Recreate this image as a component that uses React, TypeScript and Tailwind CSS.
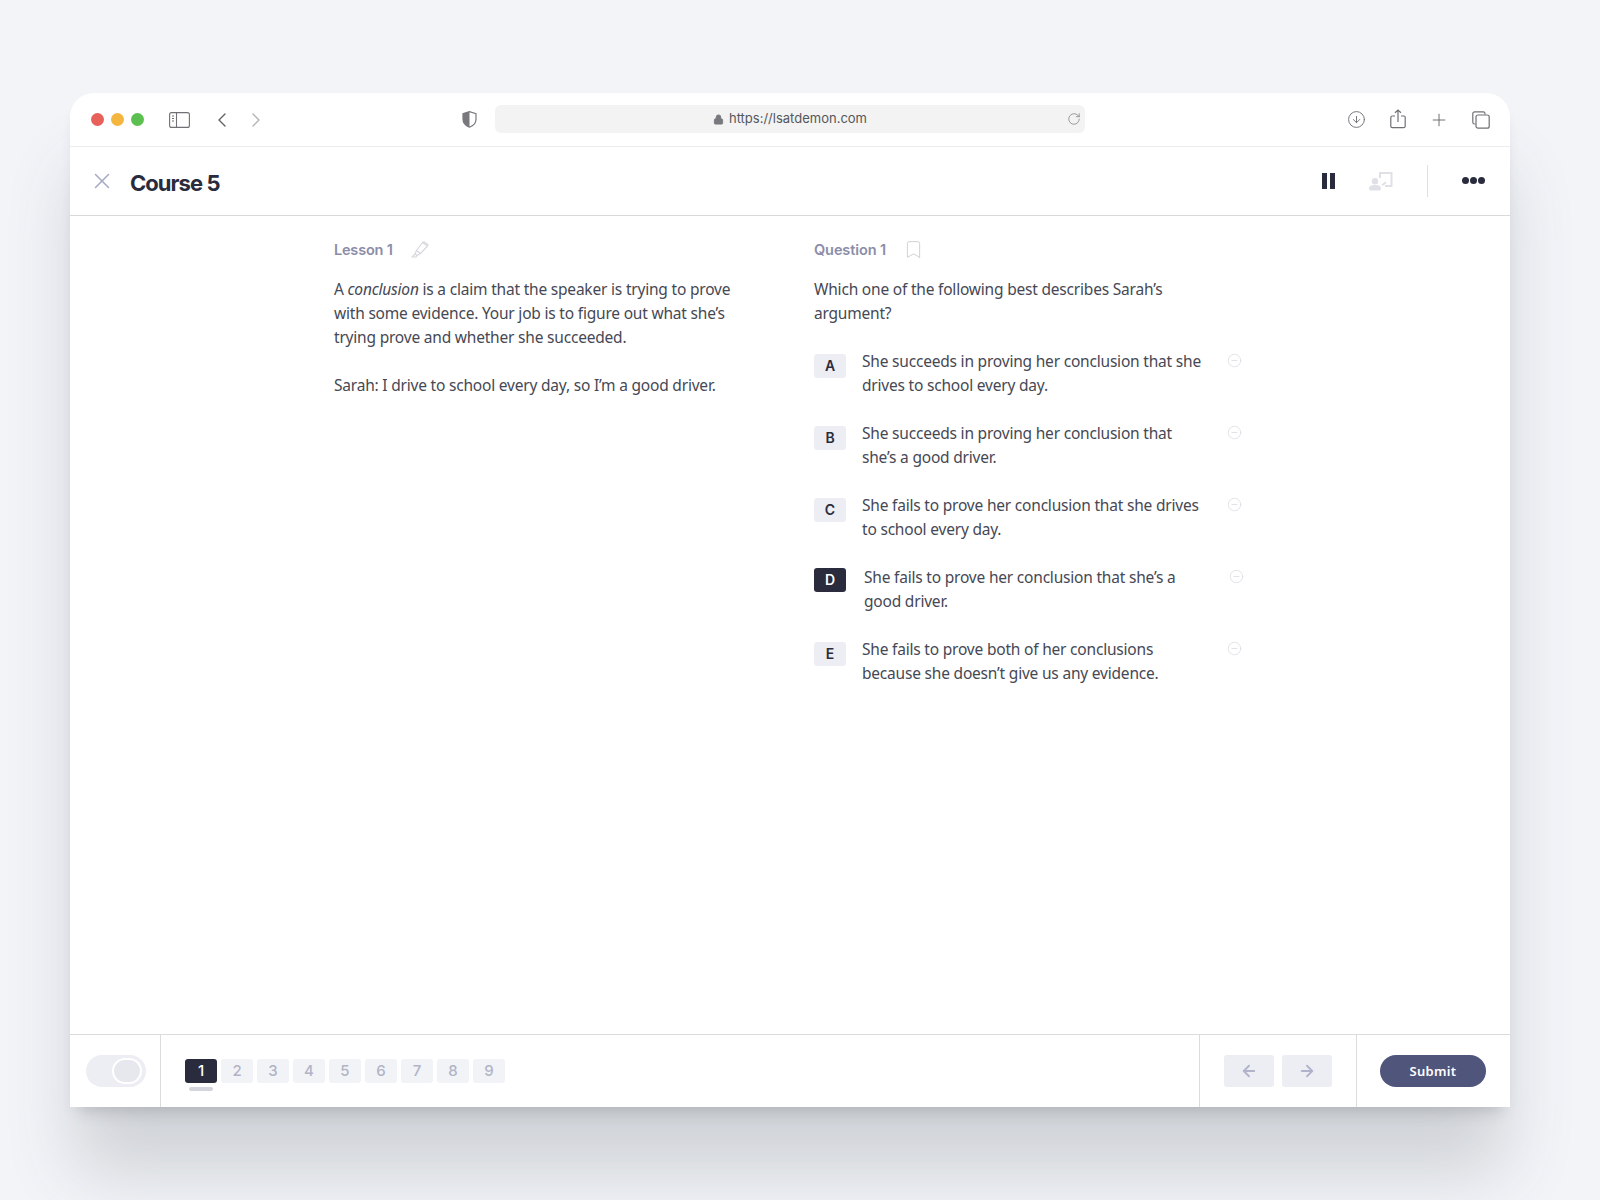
import React from 'react';
import { ChevronLeft, ChevronRight, CircleArrowDown, Plus, RotateCw, Lock, X, Bookmark, CircleMinus, ArrowLeft, ArrowRight } from 'lucide-react';

const BODY = "font-['Noto_Sans',sans-serif]";
const UI = "font-['Inter',sans-serif]";

const options = [
  { key: 'A', lines: ['She succeeds in proving her conclusion that she', 'drives to school every day.'] },
  { key: 'B', lines: ['She succeeds in proving her conclusion that', 'she’s a good driver.'] },
  { key: 'C', lines: ['She fails to prove her conclusion that she drives', 'to school every day.'] },
  { key: 'D', lines: ['She fails to prove her conclusion that she’s a', 'good driver.'], selected: true },
  { key: 'E', lines: ['She fails to prove both of her conclusions', 'because she doesn’t give us any evidence.'] },
];

const SidebarIcon = () => (
  <svg width="21" height="16" viewBox="0 0 21 16" fill="none" stroke="#6f7175" strokeWidth="1.1">
    <rect x="0.6" y="0.6" width="19.8" height="14.8" rx="2" />
    <path d="M7.5 0.6v14.8" />
    <path d="M3 4h2M3 6.5h2M3 9h2" strokeWidth="1.2" />
  </svg>
);

const ShieldIcon = () => (
  <svg width="15" height="17" viewBox="0 0 15 17">
    <path d="M7.5 0.7 1 2.6v5.6c0 3.8 3 6.6 6.5 8 3.5-1.4 6.5-4.2 6.5-8V2.6z" fill="#fff" stroke="#77797d" strokeWidth="1.2" />
    <path d="M7.5 0.7 1 2.6v5.6c0 3.8 3 6.6 6.5 8z" fill="#77797d" />
  </svg>
);

const ShareIcon = () => (
  <svg width="16" height="20" viewBox="0 0 16 20" fill="none" stroke="#6f7175" strokeWidth="1.2">
    <path d="M5 7H2.2A1.4 1.4 0 0 0 .8 8.4v8.8a1.4 1.4 0 0 0 1.4 1.4h11.6a1.4 1.4 0 0 0 1.4-1.4V8.4A1.4 1.4 0 0 0 13.8 7H11" />
    <path d="M8 13V1M5 3.8 8 1l3 2.8" />
  </svg>
);

const TabsIcon = () => (
  <svg width="18" height="18" viewBox="0 0 18 18" fill="none" stroke="#6f7175" strokeWidth="1.2">
    <path d="M3.5 13H2.6A1.8 1.8 0 0 1 .8 11.2V2.6A1.8 1.8 0 0 1 2.6.8h8.6A1.8 1.8 0 0 1 13 2.6v.9" />
    <rect x="4" y="4" width="13.2" height="13.2" rx="2" />
  </svg>
);

const PresenterIcon = () => (
  <svg width="25" height="19" viewBox="0 0 25 19" fill="#dfe1e7">
    <path d="M10 0h13.500v15H16v-2h5.500V2H12v4h-2z" />
    <path d="M12.500 12.500l4-3 1.200 1.400-4 3.100z" />
    <circle cx="6" cy="9.300" r="3.200" />
    <path d="M0 16.500c0-2.400 2.300-3.500 6-3.500s6 1.100 6 3.500c0 1.300-.7 2-2 2H2c-1.300 0-2-.7-2-2z" />
  </svg>
);

const HighlighterIcon = () => (
  <svg width="18" height="17" viewBox="0 0 18 17" fill="none" stroke="#d6d7de" strokeWidth="1.1" strokeLinejoin="round">
    <path d="M11.500 1.500 16.500 5 9.500 12.500 5.500 9.500z" />
    <path d="M5.500 9.500 4 13l2 1.500 3.500-2" />
    <path d="M4 13 1 16h4l1-1.500" />
    <path d="M11.500 1.500 13 .8 17 3.800 16.500 5" />
  </svg>
);

export default function App() {
  return (
    <div className="h-[1200px] w-[1600px] overflow-hidden bg-[#f2f4f8] pl-[70px] pt-[93px]">
      <div className="flex h-[1014px] w-[1440px] flex-col rounded-t-[24px] bg-white shadow-[0_12px_16px_-8px_rgba(60,65,72,0.22),0_70px_70px_-6px_rgba(70,75,80,0.2)]">
        {/* browser chrome */}
        <div className="flex h-[54px] items-center border-b border-[#ececef]">
          <div className="ml-[21px] flex gap-[7px]">
            <span className="h-[13px] w-[13px] rounded-full bg-[#e8605a]" />
            <span className="h-[13px] w-[13px] rounded-full bg-[#f4b63f]" />
            <span className="h-[13px] w-[13px] rounded-full bg-[#5bc04f]" />
          </div>
          <div className="ml-[25px]"><SidebarIcon /></div>
          <ChevronLeft className="ml-[20px] text-[#5f6165]" size={24} strokeWidth={1.4} />
          <ChevronRight className="ml-[10px] text-[#b4b5b8]" size={24} strokeWidth={1.4} />
          <div className="ml-[194px]"><ShieldIcon /></div>
          <div className="relative ml-[18px] -mt-[1px] flex h-[28px] w-[590px] items-center justify-center rounded-[6px] bg-[#f3f3f3]">
            <Lock className="mr-[5px] text-[#77797d]" size={11} fill="#77797d" />
            <span className={`${UI} text-[13px] text-[#55575b]`}>https://lsatdemon.com</span>
            <RotateCw className="absolute right-[4px] text-[#77797d]" size={14} strokeWidth={1.2} />
          </div>
          <CircleArrowDown className="ml-[262px] text-[#6f7175]" size={19} strokeWidth={1.2} />
          <div className="ml-[24px] -mt-[2px]"><ShareIcon /></div>
          <Plus className="ml-[23px] text-[#6f7175]" size={20} strokeWidth={1.2} />
          <div className="ml-[23px]"><TabsIcon /></div>
        </div>

        {/* course header */}
        <div className="flex h-[69px] items-center border-b border-[#d9d9dc]">
          <X className="ml-[19px] text-[#a9aac4]" size={26} strokeWidth={1.4} />
          <h1 className={`${UI} ml-[15px] mt-[5px] text-[22px] font-bold tracking-[-0.95px] text-[#2a2c3d]`}>Course 5</h1>
          <div className="ml-auto flex items-center">
            <div className="flex h-[16px] w-[13px] justify-between">
              <span className="w-[5px] bg-[#2a2c3d]" />
              <span className="w-[5px] bg-[#2a2c3d]" />
            </div>
            <div className="ml-[34px]"><PresenterIcon /></div>
            <div className="ml-[33px] h-[32px] w-px bg-[#dedfe3]" />
            <div className="ml-[34px] mr-[25px] -mt-[1px] flex gap-[1px]">
              <span className="h-[7px] w-[7px] rounded-full bg-[#2a2c3d]" />
              <span className="h-[7px] w-[7px] rounded-full bg-[#2a2c3d]" />
              <span className="h-[7px] w-[7px] rounded-full bg-[#2a2c3d]" />
            </div>
          </div>
        </div>

        {/* lesson + question */}
        <div className={`${BODY} flex flex-1 pl-[264px] pt-[22px] text-[15.5px] leading-[24px] tracking-[-0.2px] text-[#464854]`}>
          <div className="w-[480px]">
            <div className="flex h-[24px] items-center">
              <span className={`${UI} text-[14.5px] font-semibold tracking-[-0.2px] text-[#8b8da8]`}>Lesson 1</span>
              <span className="ml-[18px] -mt-[2px]"><HighlighterIcon /></span>
            </div>
            <p className="mt-[15px]">
              A <em>conclusion</em> is a claim that the speaker is trying to prove<br />
              with some evidence. Your job is to figure out what she’s<br />
              trying prove and whether she succeeded.
            </p>
            <p className="mt-[24px]">Sarah: I drive to school every day, so I’m a good driver.</p>
          </div>
          <div className="w-[440px]">
            <div className="flex h-[24px] items-center">
              <span className={`${UI} text-[14.5px] font-semibold tracking-[-0.1px] text-[#8b8da8]`}>Question 1</span>
              <Bookmark className="ml-[17px] -mt-[2px] text-[#c9cad4]" size={21} strokeWidth={1} />
            </div>
            <p className="mt-[15px]">
              Which one of the following best describes Sarah’s<br />
              argument?
            </p>
            <div className="mt-[24px] flex flex-col gap-[24px]">
              {options.map((o) => (
                <div key={o.key} className="flex">
                  <span
                    className={`${UI} flex h-[24px] w-[32px] shrink-0 items-center justify-center rounded-[3px] text-[14px] font-semibold tracking-normal ${
                      o.selected ? 'mt-[3px] bg-[#2a2c3d] text-white' : 'mt-[5px] bg-[#eceef3] text-[#2a2c3d]'
                    }`}
                  >
                    {o.key}
                  </span>
                  <p className={`w-[365px] shrink-0 ${o.selected ? 'ml-[18px]' : 'ml-[16px]'}`}>
                    {o.lines[0]}<br />{o.lines[1]}
                  </p>
                  <CircleMinus className="mt-[4px] shrink-0 text-[#dcdde3]" size={15} strokeWidth={1.3} />
                </div>
              ))}
            </div>
          </div>
        </div>

        {/* footer */}
        <div className="flex h-[73px] border-t border-[#dcdcdf]">
          <div className="flex w-[91px] items-center border-r border-[#dcdcdf] pl-[16px]">
            <div className="flex h-[32px] w-[60px] items-center justify-end rounded-full bg-[#eceef3] pr-[4px]">
              <span className="h-[26px] w-[30px] rounded-full border-2 border-white bg-[#e6e8ed]" />
            </div>
          </div>
          <div className="flex flex-1 pl-[24px] pt-[24px]">
            {[1, 2, 3, 4, 5, 6, 7, 8, 9].map((n) => (
              <div key={n} className="mr-[4px] w-[32px]">
                <div
                  className={`${UI} flex h-[24px] items-center justify-center rounded-[3px] pt-[1px] text-[15px] font-medium ${
                    n === 1 ? 'bg-[#2a2c3d] text-white' : 'bg-[#f2f3f7] text-[#b1b3c6]'
                  }`}
                >
                  {n}
                </div>
                {n === 1 && <div className="mx-auto mt-[4px] h-[4px] w-[24px] rounded-full bg-[#d3d4dc]" />}
              </div>
            ))}
          </div>
          <div className="flex w-[157px] items-center gap-[8px] border-l border-[#dcdcdf] pl-[24px]">
            <div className="flex h-[32px] w-[50px] items-center justify-center rounded-[3px] bg-[#eceef4]">
              <ArrowLeft className="text-[#b1b3cb]" size={18} strokeWidth={2.4} />
            </div>
            <div className="flex h-[32px] w-[50px] items-center justify-center rounded-[3px] bg-[#eceef4]">
              <ArrowRight className="text-[#b1b3cb]" size={18} strokeWidth={2.4} />
            </div>
          </div>
          <div className="flex w-[154px] items-center border-l border-[#dcdcdf] pl-[23px]">
            <button className={`${BODY} h-[32px] w-[106px] rounded-full bg-[#50557c] pt-[2px] text-[13px] font-semibold tracking-[0.3px] text-white`}>Submit</button>
          </div>
        </div>
      </div>
    </div>
  );
}
